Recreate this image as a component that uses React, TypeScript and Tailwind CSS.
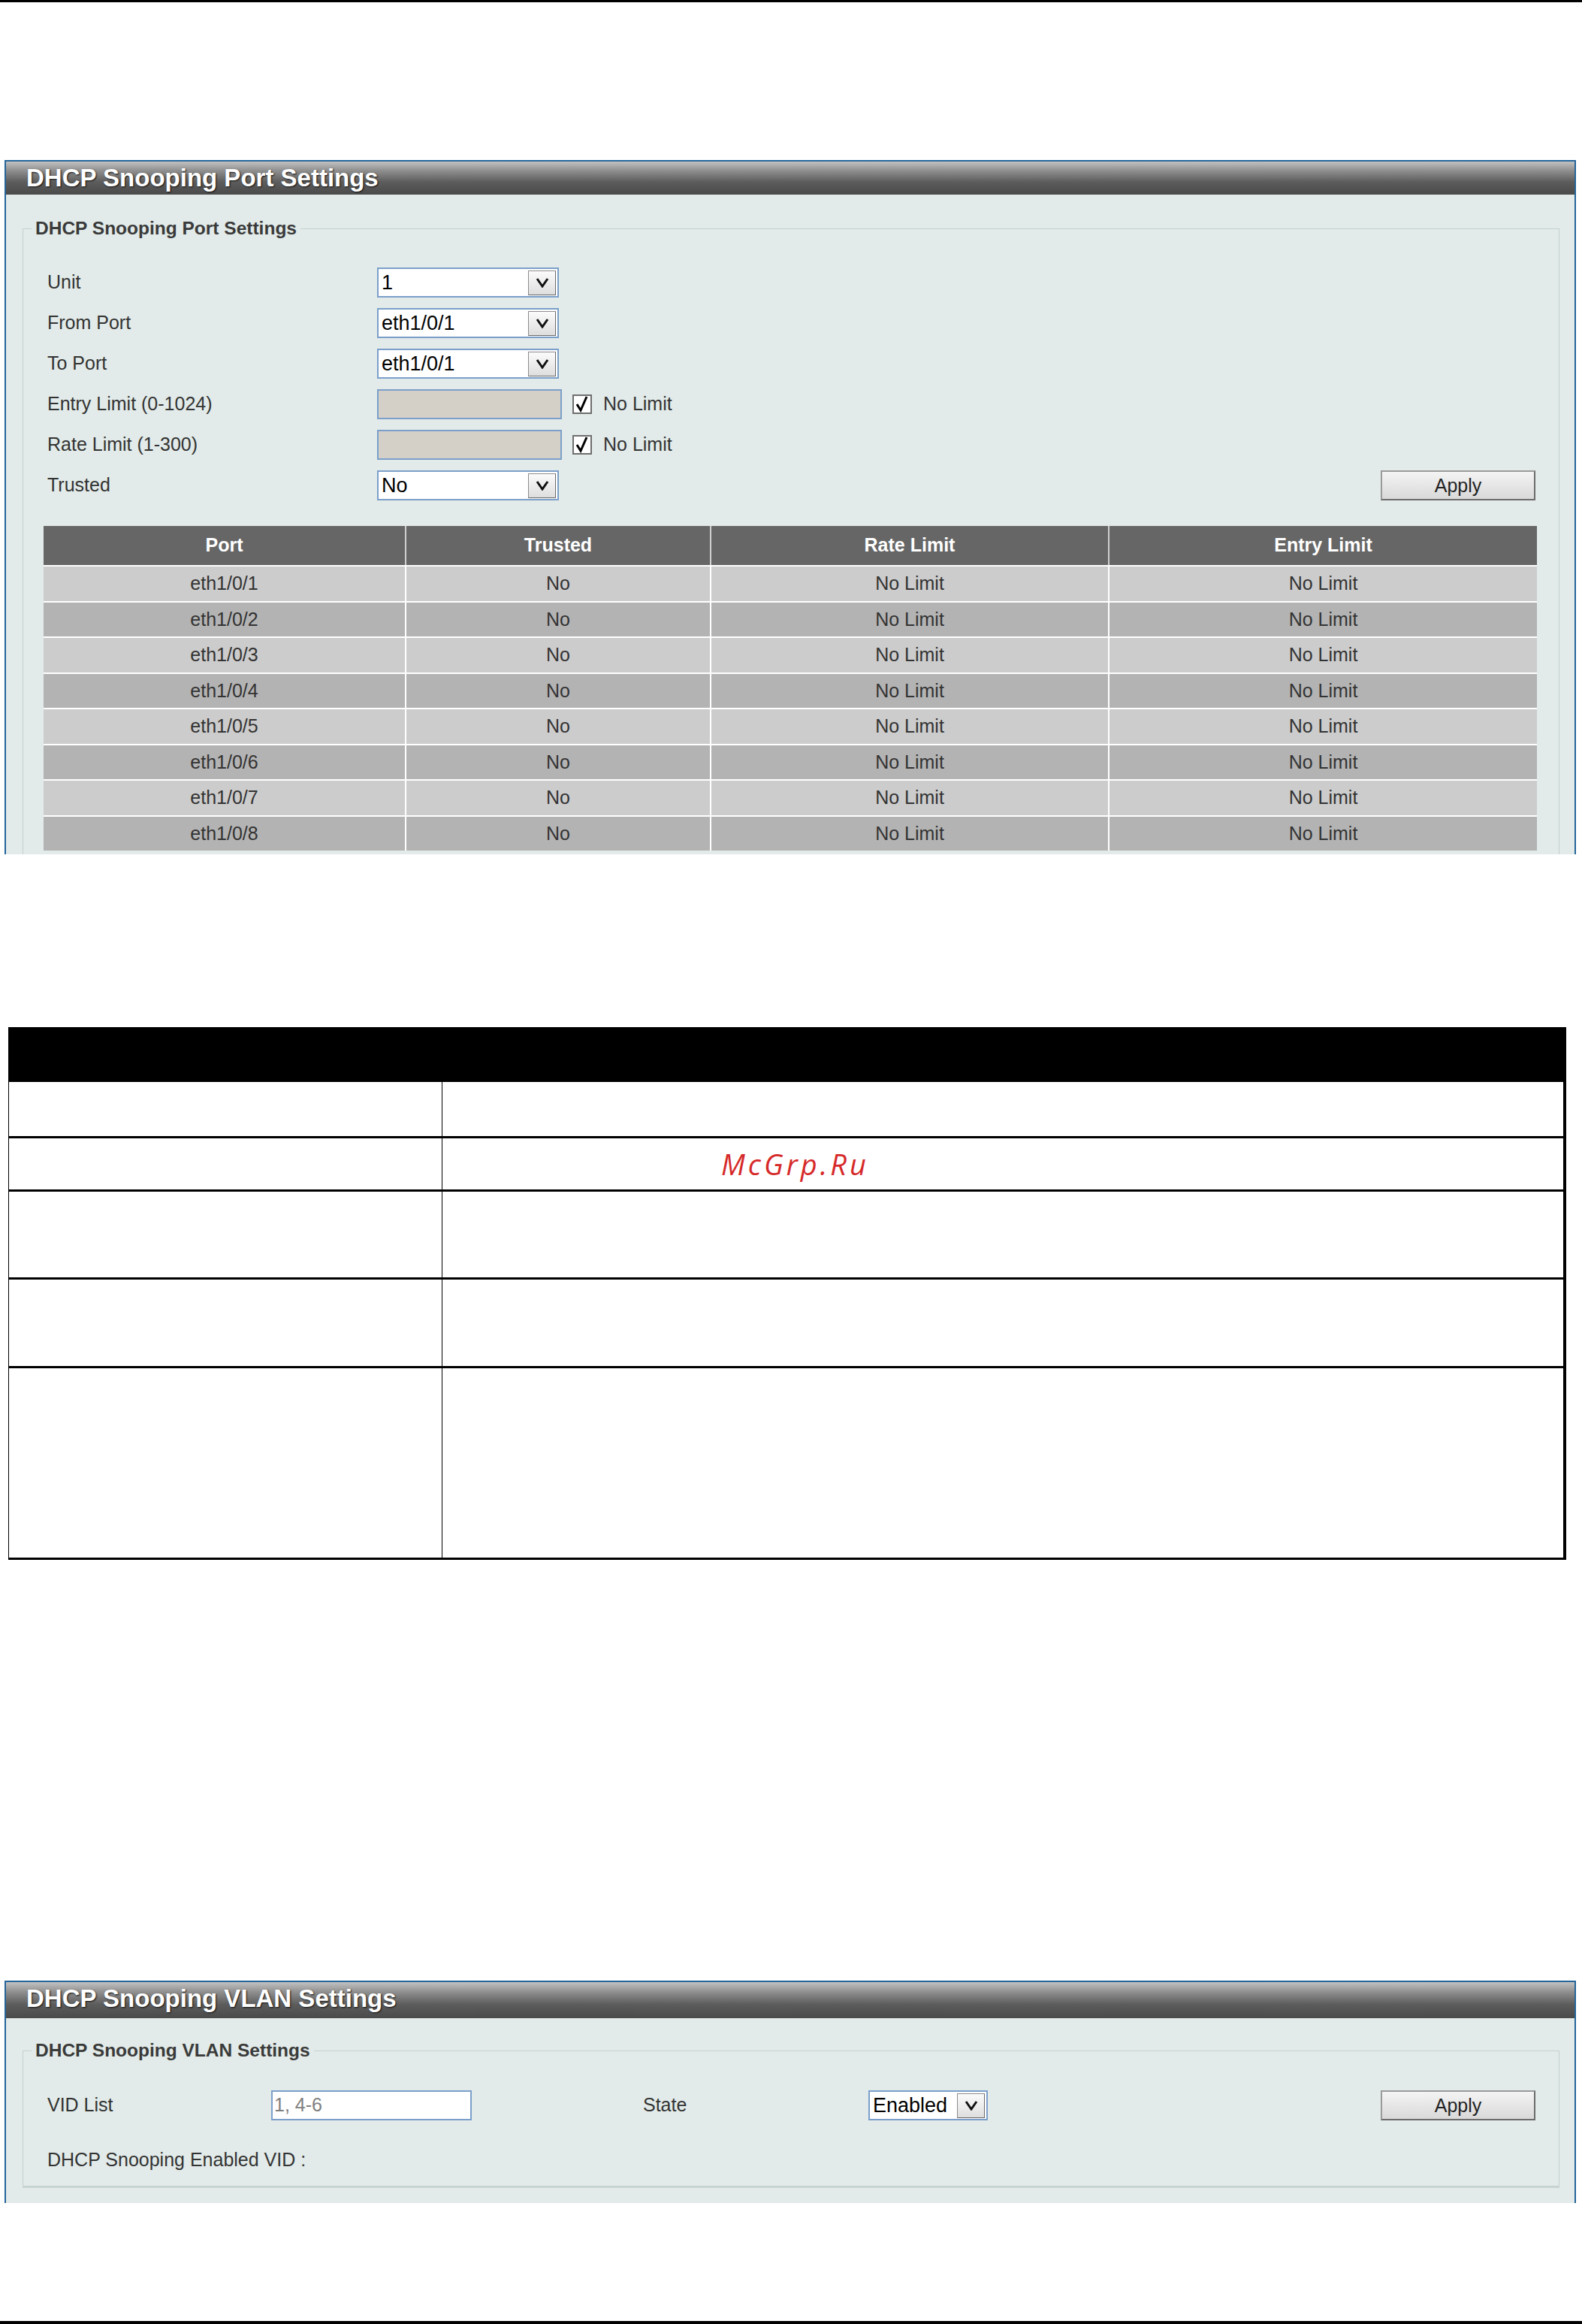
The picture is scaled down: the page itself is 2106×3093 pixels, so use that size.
const rows = ["eth1/0/1", "eth1/0/2", "eth1/0/3", "eth1/0/4", "eth1/0/5", "eth1/0/6", "eth1/0/7", "eth1/0/8"];

function Arrow() {
  return (
    <div className="flex h-[33px] w-[37px] shrink-0 items-center justify-center border border-[#8c8c8c] border-r-[#6a6a6a] border-b-[#6a6a6a] bg-[linear-gradient(to_bottom,#fbfbfb,#dedede)]">
      <svg width="18" height="14" viewBox="0 0 18 14">
        <path d="M2 2 L9 12 L16 2" fill="none" stroke="#111" strokeWidth="3" />
      </svg>
    </div>
  );
}

function Select({ value, width }: { value: string; width: string }) {
  return (
    <div className={`flex h-[40px] ${width} shrink-0 items-center border-2 border-[#7b9fca] bg-white pl-[4px] pr-[2px]`}>
      <span className="flex-1 text-[27px] leading-none text-black">{value}</span>
      <Arrow />
    </div>
  );
}

function Check() {
  return (
    <div className="flex h-[26px] w-[26px] shrink-0 items-center justify-center border-2 border-[#6e6e6e] bg-white">
      <svg width="20" height="22" viewBox="0 0 20 22">
        <path d="M3 11 L8 19 L16 1" fill="none" stroke="#000" strokeWidth="3" />
      </svg>
    </div>
  );
}

function ApplyButton() {
  return (
    <button
      type="button"
      className="ml-auto h-[40px] w-[206px] border-2 border-[#9a9a9a] border-r-[#6c6c6c] border-b-[#6c6c6c] bg-[linear-gradient(to_bottom,#f4f4f4,#d9d9d9)] text-[25px] text-[#222]"
    >
      Apply
    </button>
  );
}

function PanelHeader({ title }: { title: string }) {
  return (
    <div className="h-[48px] bg-[linear-gradient(to_bottom,#c2c2c2_0%,#8e8e8e_28%,#5c5c5c_62%,#4a4a4a_100%)] pl-[27px]">
      <div className="text-[33px] font-bold leading-[44px] text-white [text-shadow:1px_1px_2px_#111]">{title}</div>
    </div>
  );
}

function FormRow({ label, children }: { label: string; children: React.ReactNode }) {
  return (
    <div className="flex h-[40px] items-center">
      <div className="w-[439px] shrink-0 text-[25px] text-[#333]">{label}</div>
      {children}
    </div>
  );
}

function PortPanel() {
  return (
    <div className="mt-[210px] ml-[6px] flex h-[924px] w-[2092px] flex-col overflow-hidden border-x-2 border-t-2 border-[#24649a]">
      <PanelHeader title="DHCP Snooping Port Settings" />
      <div className="flex-1 bg-[#e2ebe9] pt-[31px] pl-[22px]">
        <fieldset className="w-[2046px] border border-[#c3d0cf]">
          <legend className="ml-[11px] px-[5px] text-[24.5px] font-bold leading-[28px] text-[#3a3a3a]">DHCP Snooping Port Settings</legend>
          <div className="flex flex-col gap-[14px] pt-[38px] pr-[31px] pl-[32px]">
            <FormRow label="Unit">
              <Select value="1" width="w-[242px]" />
            </FormRow>
            <FormRow label="From Port">
              <Select value="eth1/0/1" width="w-[242px]" />
            </FormRow>
            <FormRow label="To Port">
              <Select value="eth1/0/1" width="w-[242px]" />
            </FormRow>
            <FormRow label="Entry Limit (0-1024)">
              <div className="h-[40px] w-[246px] border-2 border-[#7b9fca] bg-[#d4d0c8]" />
              <div className="ml-[14px]"><Check /></div>
              <span className="ml-[15px] text-[25px] text-[#333]">No Limit</span>
            </FormRow>
            <FormRow label="Rate Limit (1-300)">
              <div className="h-[40px] w-[246px] border-2 border-[#7b9fca] bg-[#d4d0c8]" />
              <div className="ml-[14px]"><Check /></div>
              <span className="ml-[15px] text-[25px] text-[#333]">No Limit</span>
            </FormRow>
            <FormRow label="Trusted">
              <Select value="No" width="w-[242px]" />
              <ApplyButton />
            </FormRow>
          </div>
          <div className="mt-[34px] ml-[27px] w-[1988px] pb-[40px]">
            <div className="grid h-[52px] grid-cols-[481px_406px_530px_571px] bg-[#666666] text-[25px] font-bold text-white">
              {["Port", "Trusted", "Rate Limit", "Entry Limit"].map((h, i) => (
                <div key={h} className={`flex items-center justify-center ${i > 0 ? "border-l-2 border-[#cfcfcf]" : ""}`}>
                  {h}
                </div>
              ))}
            </div>
            {rows.map((port, r) => (
              <div
                key={port}
                className={`grid h-[47.5px] grid-cols-[481px_406px_530px_571px] border-t-2 border-white text-[25px] text-[#333] ${r % 2 === 0 ? "bg-[#cccccc]" : "bg-[#b3b3b3]"}`}
              >
                {[port, "No", "No Limit", "No Limit"].map((c, i) => (
                  <div key={i} className={`flex items-center justify-center ${i > 0 ? "border-l-2 border-white" : ""}`}>
                    {c}
                  </div>
                ))}
              </div>
            ))}
          </div>
        </fieldset>
      </div>
    </div>
  );
}

function DescTable() {
  const heights = ["h-[75px]", "h-[71px]", "h-[117px]", "h-[118px]", "h-[255px]"];
  return (
    <div className="mt-[230px] ml-[11px] w-[2074px]">
      <div className="h-[73px] bg-black" />
      <div className="border-l border-r-4 border-black">
        {heights.map((h, i) => (
          <div key={i} className={`grid ${h} grid-cols-[577px_1fr] border-b-[3px] border-black`}>
            <div className="border-r border-black" />
            <div className="flex items-center pl-[371px]">
              {i === 1 ? (
                <span className="font-['Open_Sans',sans-serif] text-[38px] italic tracking-[4px] text-[#d62a2a]">McGrp.Ru</span>
              ) : null}
            </div>
          </div>
        ))}
      </div>
    </div>
  );
}

function VlanPanel() {
  return (
    <div className="mt-[560px] ml-[6px] flex h-[296px] w-[2092px] flex-col overflow-hidden border-x-2 border-t-2 border-[#24649a]">
      <PanelHeader title="DHCP Snooping VLAN Settings" />
      <div className="flex-1 bg-[#e2ebe9] pt-[29px] pl-[22px]">
        <fieldset className="w-[2046px] border border-[#c3d0cf] shadow-[0_2px_0_#c9d5d4]">
          <legend className="ml-[11px] px-[5px] text-[24.5px] font-bold leading-[28px] text-[#3a3a3a]">DHCP Snooping VLAN Settings</legend>
          <div className="pt-[39px] pr-[31px] pb-[21px] pl-[32px]">
            <div className="flex h-[40px] items-center">
              <div className="w-[298px] shrink-0 text-[25px] text-[#333]">VID List</div>
              <div className="flex h-[40px] w-[267px] shrink-0 items-center border-2 border-[#7b9fca] bg-white pl-[2px] text-[25px] text-[#808080]">
                1, 4-6
              </div>
              <div className="ml-[228px] w-[300px] shrink-0 text-[25px] text-[#333]">State</div>
              <Select value="Enabled" width="w-[159px]" />
              <ApplyButton />
            </div>
            <div className="mt-[38px] text-[25px] leading-[28px] text-[#333]">DHCP Snooping Enabled VID :</div>
          </div>
        </fieldset>
      </div>
    </div>
  );
}

export default function App() {
  return (
    <div className="h-[3093px] w-[2106px] overflow-hidden bg-white font-['Liberation_Sans',Arial,sans-serif]">
      <div className="h-[3px] bg-black" />
      <PortPanel />
      <DescTable />
      <VlanPanel />
      <div className="mt-[157px] h-[4px] bg-black" />
    </div>
  );
}
